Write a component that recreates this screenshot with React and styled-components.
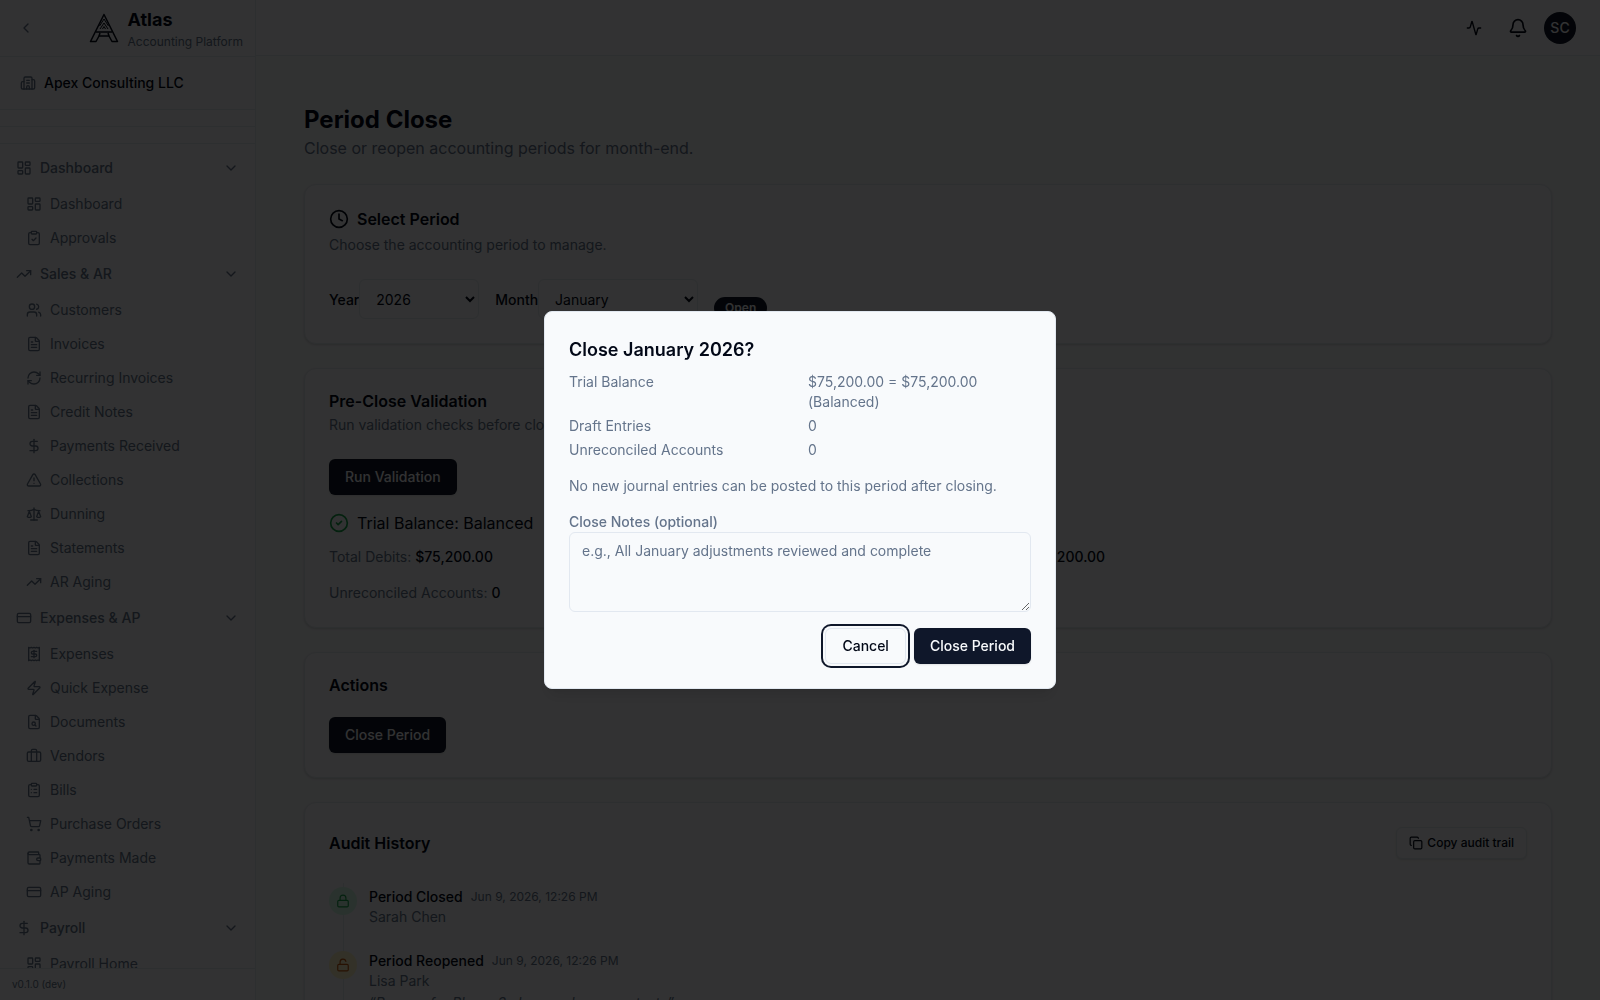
import styled, {createGlobalStyle, css} from 'styled-components'
import {
  Activity, Bell, Briefcase, Building2, ChevronDown, ChevronLeft, CircleCheck, ClipboardCheck,
  ClipboardList, Clock, Copy, CreditCard, DollarSign, FileSearch, FileText, LayoutDashboard,
  Lock, LockOpen, Receipt, RefreshCw, Scale, ShoppingCart, TrendingUp, TriangleAlert, Users,
  Wallet, Zap,
} from 'lucide-react'

const GlobalStyle = createGlobalStyle`
  :root {
    --bg: #f8fafc;
    --canvas: #f6f8fb;
    --text: #020817;
    --muted: #64748b;
    --primary: #0f172a;
    --border: #e2e8f0;
    --shadow: 0 1px 3px rgba(0, 0, 0, .1), 0 1px 2px rgba(0, 0, 0, .06);
    --family: Inter, "Liberation Sans", sans-serif;
  }

  * {
    box-sizing: border-box;
  }

  body {
    margin: 0;
    overflow: hidden;
    background: var(--bg);
    color: var(--text);
    font-family: var(--family);
    font-size: 14px;
    line-height: 20px;
  }

  h1, h2, p, dl, dd, ul, ol {
    margin: 0;
    padding: 0;
  }

  button, select, textarea {
    font: inherit;
    color: inherit;
  }

  svg {
    flex-shrink: 0;
  }
`

const Layout = styled.div`
  display: flex;
  height: 100vh;
  overflow: hidden;
`

const Sidebar = styled.aside`
  display: flex;
  flex-direction: column;
  flex: 0 0 256px;
  min-height: 0;
  border-right: 1px solid var(--border);
`

const SidebarTop = styled.div`
  display: flex;
  align-items: center;
  justify-content: space-between;
  height: 57px;
  padding: 0 12px 0 8px;
  border-bottom: 1px solid var(--border);
`

const IconButton = styled.button`
  display: flex;
  align-items: center;
  justify-content: center;
  width: 36px;
  height: 36px;
  padding: 0;
  border: 0;
  background: none;
  color: ${p => p.$muted ? 'var(--muted)' : 'var(--text)'};
  cursor: pointer;
`

const Brand = styled.a`
  display: flex;
  align-items: center;
  gap: 8px;
  color: var(--text);
  text-decoration: none;
`

const BrandName = styled.div`
  font-size: 18px;
  line-height: 28px;
  font-weight: 700;
`

const BrandNote = styled.div`
  font-size: 12px;
  line-height: 16px;
  color: var(--muted);
`

const Company = styled.div`
  display: flex;
  align-items: center;
  gap: 8px;
  height: 53px;
  padding: 0 20px;
  border-bottom: 1px solid var(--border);
  font-weight: 500;

  svg {
    color: var(--muted);
  }
`

const Strip = styled.div`
  height: 17px;
  border-bottom: 1px solid var(--border);
`

const Nav = styled.nav`
  display: flex;
  flex-direction: column;
  flex: 1;
  gap: 2px;
  min-height: 0;
  padding-top: 6px;
  overflow: hidden;
  color: var(--muted);
`

const NavGroup = styled.button`
  display: flex;
  align-items: center;
  flex-shrink: 0;
  gap: 8px;
  height: 36px;
  padding: 0 16px;
  border: 0;
  background: none;
  color: inherit;
  font-weight: 500;
  text-align: left;
  cursor: pointer;

  span {
    flex: 1;
  }
`

const NavItem = styled.a`
  display: flex;
  align-items: center;
  flex-shrink: 0;
  gap: 8px;
  height: 32px;
  padding: 0 26px;
  color: inherit;
  text-decoration: none;
`

const Version = styled.div`
  padding: 7px 12px 8px;
  border-top: 1px solid var(--border);
  font-size: 10px;
  line-height: 16px;
  color: var(--muted);
`

const Page = styled.div`
  display: flex;
  flex-direction: column;
  flex: 1;
  min-width: 0;
`

const Topbar = styled.header`
  display: flex;
  align-items: center;
  justify-content: flex-end;
  gap: 8px;
  flex: 0 0 56px;
  padding: 0 24px;
  border-bottom: 1px solid var(--border);
`

const Avatar = styled.button`
  width: 32px;
  height: 32px;
  padding: 0;
  border: 0;
  border-radius: 50%;
  background: var(--primary);
  color: var(--bg);
  font-weight: 500;
`

const Main = styled.main`
  display: flex;
  flex-direction: column;
  flex: 1;
  gap: 24px;
  min-height: 0;
  padding: 48px;
  overflow: hidden;
  background: var(--canvas);
`

const Title = styled.h1`
  font-size: 24px;
  line-height: 32px;
  font-weight: 700;
`

const Subtitle = styled.p`
  font-size: 16px;
  line-height: 24px;
  color: var(--muted);
`

const Card = styled.section`
  flex-shrink: 0;
  padding: 24px;
  border: 1px solid var(--border);
  border-radius: 12px;
  background: var(--bg);
  box-shadow: var(--shadow);
`

const CardHead = styled.div`
  display: flex;
  flex-direction: column;
  gap: 6px;
  margin-bottom: 24px;
`

const CardTitle = styled.h2`
  display: flex;
  align-items: center;
  gap: 8px;
  font-size: 16px;
  line-height: 16px;
  font-weight: 600;
`

const Muted = styled.p`
  color: var(--muted);
`

const Row = styled.div`
  display: flex;
  align-items: ${p => p.$align || 'center'};
  justify-content: ${p => p.$justify || 'flex-start'};
  gap: ${p => p.$gap || 8}px;
`

const Field = styled.div`
  display: flex;
  align-items: baseline;
  font-weight: 500;
`

const Select = styled.select`
  width: ${p => p.$wide ? 160 : 120}px;
  height: 40px;
  padding: 0 12px;
  border: 1px solid var(--border);
  border-radius: 6px;
  background: var(--bg);
  font-weight: 400;
`

const Badge = styled.span`
  padding: 3px 11px;
  border-radius: 11px;
  background: var(--primary);
  color: var(--bg);
  font-size: 12px;
  line-height: 16px;
  font-weight: 600;
`

const Button = styled.button`
  display: inline-flex;
  align-items: center;
  justify-content: center;
  gap: 4px;
  height: 36px;
  padding: 0 16px;
  border: 0;
  border-radius: 6px;
  background: var(--primary);
  color: var(--bg);
  font-weight: 500;
  box-shadow: 0 1px 2px rgba(0, 0, 0, .1);
  cursor: pointer;

  ${p => p.$outline && css`
    border: 1px solid var(--border);
    background: var(--bg);
    color: var(--text);
  `}

  ${p => p.$small && css`
    height: 32px;
    padding: 0 12px;
    font-size: 12px;
  `}

  ${p => p.$ring && css`
    box-shadow: 0 0 0 2px var(--bg), 0 0 0 4px var(--primary);
  `}
`

const Result = styled.div`
  display: flex;
  align-items: center;
  gap: 8px;
  margin: 16px 0 12px;
  font-size: 16px;
  line-height: 24px;

  svg {
    color: #16a34a;
  }
`

const Totals = styled.div`
  display: grid;
  grid-template-columns: 1fr 1fr;
  gap: 16px;
  color: var(--muted);

  b {
    color: var(--text);
    font-weight: 500;
  }
`

const Timeline = styled.ol`
  display: flex;
  flex-direction: column;
  gap: 24px;
  padding-top: 4px;
  list-style: none;
  background: linear-gradient(var(--border), var(--border)) 14px 0 / 1px 100% no-repeat;
`

const Entry = styled.li`
  display: flex;
  align-items: flex-start;
  gap: 12px;
`

const Dot = styled.span`
  display: flex;
  align-items: center;
  justify-content: center;
  width: 28px;
  height: 28px;
  border-radius: 50%;
  background: ${p => p.$open ? '#fef3c7' : '#d1fae5'};
  color: ${p => p.$open ? '#c2570c' : '#16a34a'};
`

const EntryName = styled.span`
  font-weight: 500;
`

const Time = styled.time`
  font-size: 12px;
  color: var(--muted);
`

const Quote = styled(Muted)`
  margin-top: 2px;
  font-style: italic;
`

const Overlay = styled.div`
  position: fixed;
  inset: 0;
  display: flex;
  align-items: center;
  justify-content: center;
  background: rgba(0, 0, 0, .8);
`

const Dialog = styled.div`
  display: flex;
  flex-direction: column;
  gap: 16px;
  width: 100%;
  max-width: 512px;
  padding: 24px;
  border: 1px solid var(--border);
  border-radius: 8px;
  background: var(--bg);
  color: var(--muted);
  box-shadow: 0 10px 15px -3px rgba(0, 0, 0, .1), 0 4px 6px -4px rgba(0, 0, 0, .1);
`

const DialogTitle = styled.h2`
  margin-bottom: 8px;
  color: var(--text);
  font-size: 18px;
  line-height: 28px;
  font-weight: 600;
`

const Summary = styled.dl`
  display: grid;
  grid-template-columns: 1fr 1fr;
  gap: 4px 16px;
`

const Notes = styled.div`
  display: flex;
  flex-direction: column;

  label {
    font-weight: 500;
  }

  textarea {
    height: 80px;
    padding: 8px 12px;
    border: 1px solid var(--border);
    border-radius: 6px;
    background: var(--bg);
    resize: vertical;
  }

  textarea::placeholder {
    color: var(--muted);
  }
`

const nav = [
  {name: 'Dashboard', icon: LayoutDashboard, items: [
    ['Dashboard', LayoutDashboard],
    ['Approvals', ClipboardCheck],
  ]},
  {name: 'Sales & AR', icon: TrendingUp, items: [
    ['Customers', Users],
    ['Invoices', FileText],
    ['Recurring Invoices', RefreshCw],
    ['Credit Notes', FileText],
    ['Payments Received', DollarSign],
    ['Collections', TriangleAlert],
    ['Dunning', Scale],
    ['Statements', FileText],
    ['AR Aging', TrendingUp],
  ]},
  {name: 'Expenses & AP', icon: CreditCard, items: [
    ['Expenses', Receipt],
    ['Quick Expense', Zap],
    ['Documents', FileSearch],
    ['Vendors', Briefcase],
    ['Bills', ClipboardList],
    ['Purchase Orders', ShoppingCart],
    ['Payments Made', Wallet],
    ['AP Aging', CreditCard],
  ]},
  {name: 'Payroll', icon: DollarSign, items: [
    ['Payroll Home', LayoutDashboard],
  ]},
]

const history = [
  {name: 'Period Closed', time: 'Jun 9, 2026, 12:26 PM', who: 'Sarah Chen'},
  {name: 'Period Reopened', time: 'Jun 9, 2026, 12:26 PM', who: 'Lisa Park', open: true,
    note: '“Reopen for Phase 3 close and re-open tests”'},
]

const Logo = () => (
  <svg width="32" height="32" viewBox="0 0 32 32" fill="none" stroke="currentColor" strokeWidth="1.5" strokeLinejoin="round">
    <path d="M16 2.5 2.5 29.5H8L11 24H21L24 29.5H29.5Z"/>
    <path d="M8 20H24M11 24 12 21M21 24 20 21"/>
    <path d="M11.5 14 16 7 20.5 14M12 17 16 11 20 17M14.5 17 16 14.5 17.5 17" strokeWidth="1"/>
  </svg>
)

const Menu = () => (
  <Nav>
    {nav.map(({name, icon: Icon, items}) => [
      <NavGroup key={name}>
        <Icon size={16}/>
        <span>{name}</span>
        <ChevronDown size={16}/>
      </NavGroup>,
      ...items.map(([label, ItemIcon]) => (
        <NavItem key={name + label} href="#">
          <ItemIcon size={16}/>
          {label}
        </NavItem>
      )),
    ])}
  </Nav>
)

const CloseDialog = () => (
  <Overlay>
    <Dialog role="alertdialog" aria-modal="true" aria-labelledby="dialog-title">
      <div>
        <DialogTitle id="dialog-title">Close January 2026?</DialogTitle>
        <Summary>
          <dt>Trial Balance</dt>
          <dd>$75,200.00 = $75,200.00 (Balanced)</dd>
          <dt>Draft Entries</dt>
          <dd>0</dd>
          <dt>Unreconciled Accounts</dt>
          <dd>0</dd>
        </Summary>
      </div>
      <p>No new journal entries can be posted to this period after closing.</p>
      <Notes>
        <label htmlFor="notes">Close Notes (optional)</label>
        <textarea id="notes" placeholder="e.g., All January adjustments reviewed and complete"/>
      </Notes>
      <Row $justify="flex-end">
        <Button $outline $ring>Cancel</Button>
        <Button>Close Period</Button>
      </Row>
    </Dialog>
  </Overlay>
)

const App = () => (
  <>
    <GlobalStyle/>
    <Layout>
      <Sidebar>
        <SidebarTop>
          <IconButton $muted aria-label="Collapse sidebar"><ChevronLeft size={16}/></IconButton>
          <Brand href="#">
            <Logo/>
            <div>
              <BrandName>Atlas</BrandName>
              <BrandNote>Accounting Platform</BrandNote>
            </div>
          </Brand>
        </SidebarTop>
        <Company><Building2 size={16}/>Apex Consulting LLC</Company>
        <Strip/>
        <Strip/>
        <Menu/>
        <Version>v0.1.0 (dev)</Version>
      </Sidebar>
      <Page>
        <Topbar>
          <IconButton aria-label="Activity"><Activity size={16}/></IconButton>
          <IconButton aria-label="Notifications"><Bell size={20}/></IconButton>
          <Avatar>SC</Avatar>
        </Topbar>
        <Main>
          <div>
            <Title>Period Close</Title>
            <Subtitle>Close or reopen accounting periods for month-end.</Subtitle>
          </div>
          <Card>
            <CardHead>
              <CardTitle><Clock size={20}/>Select Period</CardTitle>
              <Muted>Choose the accounting period to manage.</Muted>
            </CardHead>
            <Row $gap={16} $align="flex-end">
              <Field>
                <label htmlFor="year">Year</label>
                <Select id="year"><option>2026</option></Select>
              </Field>
              <Field>
                <label htmlFor="month">Month</label>
                <Select id="month" $wide><option>January</option></Select>
              </Field>
              <Badge>Open</Badge>
            </Row>
          </Card>
          <Card>
            <CardHead>
              <CardTitle>Pre-Close Validation</CardTitle>
              <Muted>Run validation checks before closing the period.</Muted>
            </CardHead>
            <Button>Run Validation</Button>
            <Result><CircleCheck size={20}/>Trial Balance: Balanced</Result>
            <Totals>
              <span>Total Debits: <b>$75,200.00</b></span>
              <span>Total Credits: <b>$75,200.00</b></span>
              <span>Unreconciled Accounts: <b>0</b></span>
            </Totals>
          </Card>
          <Card>
            <CardHead>
              <CardTitle>Actions</CardTitle>
            </CardHead>
            <Button>Close Period</Button>
          </Card>
          <Card>
            <CardHead>
              <Row $justify="space-between">
                <CardTitle>Audit History</CardTitle>
                <Button $outline $small><Copy size={14}/>Copy audit trail</Button>
              </Row>
            </CardHead>
            <Timeline>
              {history.map(({name, time, who, open, note}) => (
                <Entry key={name}>
                  <Dot $open={open}>{open ? <LockOpen size={14}/> : <Lock size={14}/>}</Dot>
                  <div>
                    <Row>
                      <EntryName>{name}</EntryName>
                      <Time>{time}</Time>
                    </Row>
                    <Muted>{who}</Muted>
                    {note && <Quote>{note}</Quote>}
                  </div>
                </Entry>
              ))}
            </Timeline>
          </Card>
        </Main>
      </Page>
    </Layout>
    <CloseDialog/>
  </>
)

export default App
